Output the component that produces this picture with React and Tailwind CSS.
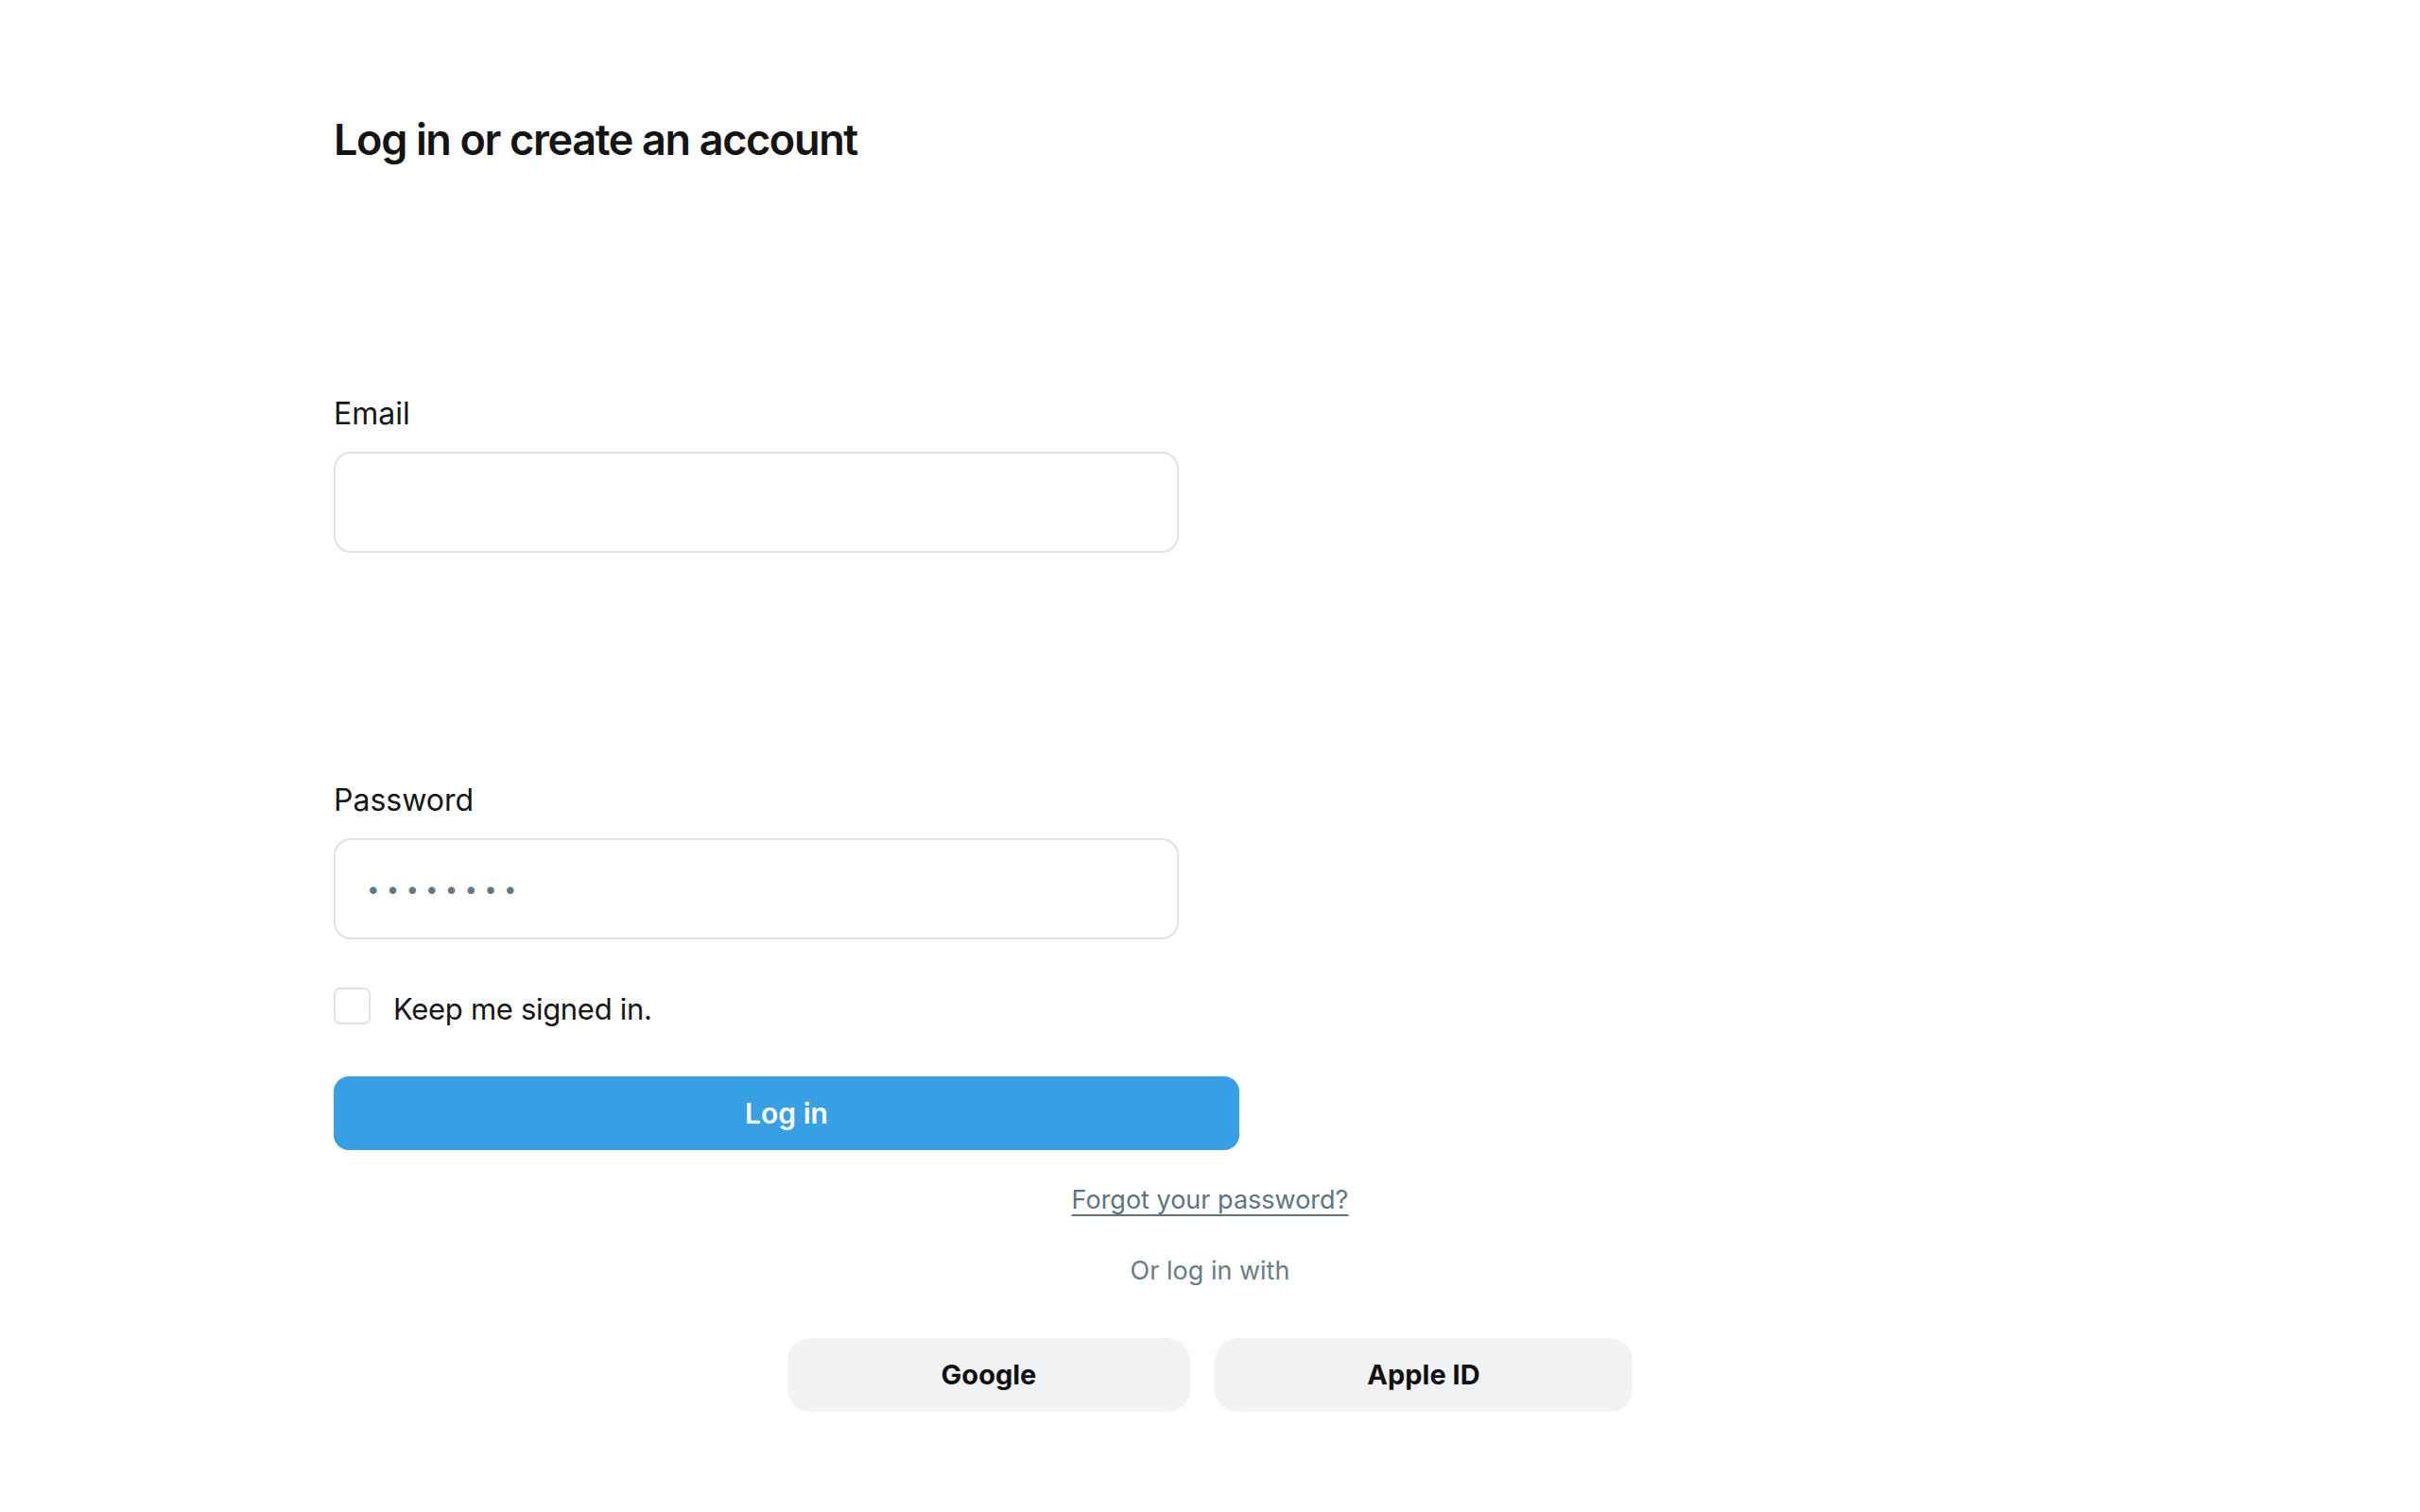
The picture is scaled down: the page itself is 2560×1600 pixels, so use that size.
import { useState } from 'react';

const font = { fontFamily: 'Inter, "Noto Sans", sans-serif' };

const Field = ({ label, type, value, onChange, className = '' }) => (
  <label className={`flex flex-col ${className}`}>
    <span className="text-[32px] leading-[40px] text-[#161616]">{label}</span>
    <input
      type={type}
      value={value}
      onChange={(event) => onChange(event.target.value)}
      className="mt-[20px] h-[107px] w-[894px] rounded-[18px] border-2 border-[#dfe1e3] bg-white px-[33px] text-[24px] tracking-[0.3em] text-[#667885] outline-none"
    />
  </label>
);

export default function App() {
  const [email, setEmail] = useState('');
  const [password, setPassword] = useState('12345678');
  const [keep, setKeep] = useState(false);

  return (
    <div className="min-h-screen bg-white px-[353px] pt-[120px] pb-[100px]" style={font}>
      <h1 className="text-[45px] font-semibold leading-[56px] tracking-[-0.03em] text-[#141414]">
        Log in or create an account
      </h1>

      <Field label="Email" type="email" value={email} onChange={setEmail} className="mt-[242px]" />
      <Field label="Password" type="password" value={password} onChange={setPassword} className="mt-[242px]" />

      <label className="mt-[50px] flex h-[40px] cursor-pointer items-center gap-[24px]">
        <input
          type="checkbox"
          checked={keep}
          onChange={(event) => setKeep(event.target.checked)}
          className="h-[39px] w-[39px] appearance-none rounded-[7px] border-2 border-[#dfe1e3] bg-white checked:bg-[#379fe3]"
        />
        <span className="mt-[7px] text-[31px] leading-[40px] tracking-[-0.01em] text-[#161616]">Keep me signed in.</span>
      </label>

      <button
        type="button"
        className="mt-[55px] h-[78px] w-[958px] rounded-[16px] bg-[#379fe3] text-[30px] font-semibold text-white"
      >
        Log in
      </button>

      <div className="mt-[33px] text-center">
        <a href="#" className="text-[27px] leading-[40px] text-[#5f7381] underline underline-offset-[6px]">
          Forgot your password?
        </a>
      </div>

      <p className="mt-[35px] text-center text-[27px] leading-[40px] text-[#6a7c89]">Or log in with</p>

      <div className="mt-[51px] flex justify-center gap-[26px]">
        <button type="button" className="h-[78px] w-[426px] rounded-[24px] bg-[#f1f2f3] text-[29px] font-bold text-[#111111]">
          Google
        </button>
        <button type="button" className="h-[78px] w-[442px] rounded-[24px] bg-[#f1f2f3] text-[29px] font-bold text-[#111111]">
          Apple ID
        </button>
      </div>
    </div>
  );
}
